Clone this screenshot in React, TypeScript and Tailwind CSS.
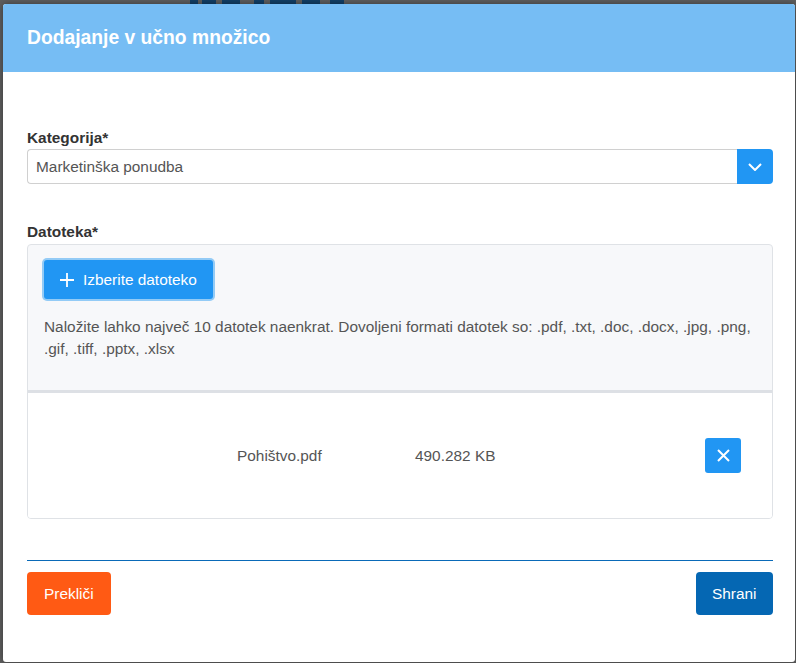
import React from "react";

const font = { fontFamily: '"Liberation Sans", Arial, sans-serif' };

export default function App() {
  return (
    <div
      className="w-[796px] h-[663px] bg-[#5e5e5e] overflow-hidden flex flex-col"
      style={font}
    >
      {/* page behind overlay (top strip) */}
      <div className="h-[4px] flex shrink-0">
        <div className="w-[190px]" />
        <div className="w-[8px] bg-[#123f66]" />
        <div className="w-[4px]" />
        <div className="w-[14px] bg-[#123f66]" />
        <div className="w-[6px]" />
        <div className="w-[18px] bg-[#123f66]" />
        <div className="w-[14px]" />
        <div className="w-[10px] bg-[#123f66]" />
        <div className="w-[6px]" />
        <div className="w-[26px] bg-[#123f66]" />
        <div className="w-[6px]" />
        <div className="w-[18px] bg-[#123f66]" />
        <div className="w-[10px]" />
        <div className="w-[14px] bg-[#123f66]" />
      </div>
      <div className="flex flex-1">
        <div className="w-[3px] shrink-0" />
        <div className="w-[792px] h-[658px] bg-white rounded-[3px] flex flex-col overflow-hidden shadow-[0_0_6px_rgba(0,0,0,0.4)]">
          {/* header */}
          <div className="h-[68px] shrink-0 bg-[#76bdf4] px-[24px] flex items-center">
            <h2 className="text-[19.3px] font-bold text-white leading-none">
              Dodajanje v učno množico
            </h2>
          </div>

          {/* body */}
          <div className="pl-[24px] pr-[22px] pt-[56px] flex flex-col">
            <label className="text-[15.4px] font-bold text-[#333] leading-[20px] mb-[1px]">
              Kategorija*
            </label>
            <div className="flex h-[35px]">
              <div className="flex-1 border border-[#d0d0d0] border-r-0 rounded-l-[4px] px-[8px] flex items-center text-[15.4px] text-[#555]">
                Marketinška ponudba
              </div>
              <button className="w-[36px] h-[35px] bg-[#2196f3] rounded-r-[4px] flex items-center justify-center">
                <svg width="14" height="8" viewBox="0 0 14 8" fill="none">
                  <path d="M1 1l6 6 6-6" stroke="white" strokeWidth="2" />
                </svg>
              </button>
            </div>

            <label className="mt-[38px] text-[15.4px] font-bold text-[#333] leading-[20px] mb-[2px]">
              Datoteka*
            </label>
            <div className="border border-[#dfe2e6] rounded-[4px] bg-[#f7f8fa] flex flex-col overflow-hidden">
              <div className="px-[16px] pt-[15px] pb-[30px] flex flex-col items-start">
                <button className="h-[39px] px-[16px] bg-[#2196f3] rounded-[3px] ring-2 ring-[#93cbf6] flex items-center gap-[9px] text-white text-[15.4px]">
                  <svg width="14" height="14" viewBox="0 0 14 14" fill="none">
                    <path d="M7 0v14M0 7h14" stroke="white" strokeWidth="1.8" />
                  </svg>
                  Izberite datoteko
                </button>
                <p className="mt-[17px] text-[15.4px] leading-[22px] text-[#555] w-[712px]">
                  Naložite lahko največ 10 datotek naenkrat. Dovoljeni formati
                  datotek so: .pdf, .txt, .doc, .docx, .jpg, .png, .gif, .tiff,
                  .pptx, .xlsx
                </p>
              </div>
              <div className="h-[3px] bg-[#dde0e5]" />
              <div className="h-[125px] bg-white flex items-center pl-[209px]">
                <span className="w-[178px] text-[15.4px] text-[#555]">
                  Pohištvo.pdf
                </span>
                <span className="text-[15.4px] text-[#555]">490.282 KB</span>
                <button className="ml-auto mr-[31px] w-[36px] h-[35px] bg-[#2196f3] rounded-[3px] flex items-center justify-center">
                  <svg width="13" height="13" viewBox="0 0 13 13" fill="none">
                    <path d="M1 1l11 11M12 1L1 12" stroke="white" strokeWidth="2" />
                  </svg>
                </button>
              </div>
            </div>

            {/* footer */}
            <div className="mt-[41px] h-[1px] bg-[#0a6ab8]" />
            <div className="mt-[11px] flex justify-between">
              <button className="h-[43px] px-[17px] bg-[#ff5a14] rounded-[4px] text-white text-[15.4px]">
                Prekliči
              </button>
              <button className="h-[43px] px-[16.5px] bg-[#0567b3] rounded-[4px] text-white text-[15.4px]">
                Shrani
              </button>
            </div>
          </div>
        </div>
      </div>
    </div>
  );
}
